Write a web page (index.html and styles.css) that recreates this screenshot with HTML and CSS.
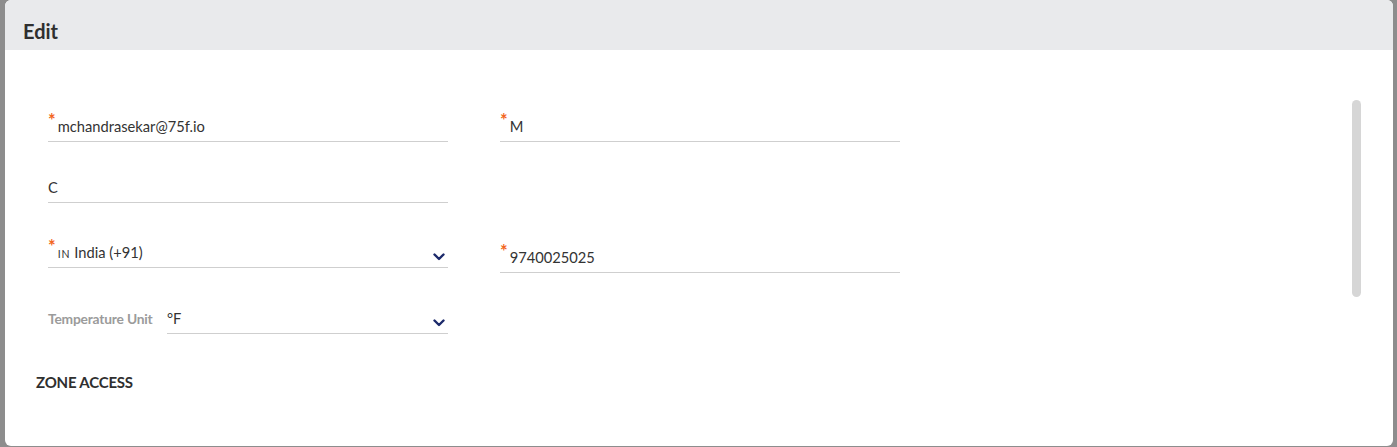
FILE: index.html
```html
<!DOCTYPE html>
<html>
<head>
<meta charset="utf-8">
<link rel="stylesheet" href="styles.css">
</head>
<body>
<div class="modal">
  <div class="modal-header">Edit</div>
  <div class="modal-body">
    <div class="scrollbar"></div>
    <div class="form">
      <div class="row">
        <div class="field"><span class="req">*</span><span class="val">mchandrasekar@75f.io</span></div>
        <div class="field"><span class="req">*</span><span class="val">M</span></div>
      </div>
      <div class="row row-2">
        <div class="field"><span class="val">C</span></div>
      </div>
      <div class="row row-3">
        <div class="field select"><span class="req">*</span><span class="cc">IN</span><span class="val">India (+91)</span>
          <svg class="chev" width="12" height="8" viewBox="0 0 12 8"><path d="M1.5 1.5 L6 6 L10.5 1.5" fill="none" stroke="#1c2a6b" stroke-width="2.4" stroke-linecap="round" stroke-linejoin="round"/></svg>
        </div>
        <div class="field phone"><span class="req">*</span><span class="val">9740025025</span></div>
      </div>
      <div class="row row-4">
        <div class="temp">
          <span class="temp-label">Temperature Unit</span>
          <div class="field select grow"><span class="val">°F</span>
            <svg class="chev" width="12" height="8" viewBox="0 0 12 8"><path d="M1.5 1.5 L6 6 L10.5 1.5" fill="none" stroke="#1c2a6b" stroke-width="2.4" stroke-linecap="round" stroke-linejoin="round"/></svg>
          </div>
        </div>
      </div>
    </div>
    <div class="section-title">ZONE ACCESS</div>
  </div>
</div>
</body>
</html>
```

FILE: styles.css
```css
html, body {
  margin: 0;
  padding: 0;
  height: 447px;
  overflow: hidden;
}
body {
  background: #8d8d8d;
  font-family: Lato, "Open Sans", sans-serif;
  color: #333;
  padding-left: 5px;
}
.modal {
  width: 1388px;
  height: 446px;
  background: #fff;
  border-radius: 6px;
  overflow: hidden;
  display: flex;
  flex-direction: column;
}
.modal-header {
  height: 50px;
  background: #e9eaec;
  box-sizing: border-box;
  padding: 19px 0 0 18px;
  font-size: 20px;
  font-weight: 700;
  line-height: 24px;
  color: #2f2f2f;
}
.modal-body {
  position: relative;
  flex: 1;
  padding: 66px 0 0 43px;
}
.scrollbar {
  position: absolute;
  left: 1347px;
  top: 50px;
  width: 9px;
  height: 197px;
  border-radius: 5px;
  background: #d6d6d6;
}
.form {
  display: flex;
  flex-direction: column;
}
.row {
  display: grid;
  grid-template-columns: 400px 400px;
  column-gap: 52px;
  align-items: start;
}
.row-2 { margin-top: 35px; }
.row-3 { margin-top: 39px; }
.row-4 { margin-top: 35px; }
.field {
  display: flex;
  align-items: baseline;
  height: 20px;
  line-height: 20px;
  padding-bottom: 5px;
  border-bottom: 1px solid #cfcfcf;
  font-size: 14.7px;
  color: #333;
}
.field.phone { margin-top: 5px; }
.req {
  color: #f26522;
  font-size: 18px;
  font-weight: 700;
  line-height: 10px;
  position: relative;
  top: -5px;
  margin-right: 2px;
}
.cc {
  font-size: 10.5px;
  letter-spacing: 0.8px;
  margin-right: 4px;
  text-transform: uppercase;
}
.select { position: relative; }
.chev {
  margin-left: auto;
  margin-right: 3px;
  align-self: flex-end;
  margin-bottom: 1px;
}
.temp {
  display: flex;
  align-items: flex-end;
}
.temp-label {
  width: 119px;
  font-size: 13.8px;
  font-weight: 700;
  color: #9b9b9b;
  line-height: 20px;
  padding-bottom: 5px;
  white-space: nowrap;
  letter-spacing: -0.2px;
}
.grow { flex: 1; }
.section-title {
  margin: 39px 0 0 -12px;
  font-size: 15px;
  font-weight: 700;
  letter-spacing: -0.2px;
  color: #2f2f2f;
}
```
